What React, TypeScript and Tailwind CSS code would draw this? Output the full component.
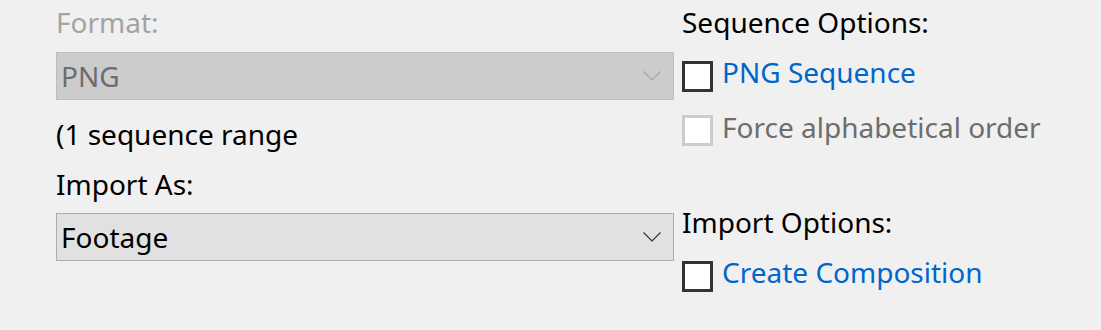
function Chevron({ color }: { color: string }) {
  return (
    <svg width="18" height="10" viewBox="0 0 18 10" className="mr-[8px]" fill="none">
      <path d="M0.5 0.5 L9 9 L17.5 0.5" stroke={color} strokeWidth="1.2" />
    </svg>
  );
}

function Select({ value, disabled }: { value: string; disabled?: boolean }) {
  return (
    <div
      className={
        "flex h-[48px] w-[618px] items-center justify-between border px-[4px] " +
        (disabled
          ? "border-[#bcbcbc] bg-[#cccccc] text-[#6d6d6d]"
          : "border-[#adadad] bg-[#e1e1e1] text-black")
      }
    >
      <span className="leading-[28px]">{value}</span>
      <Chevron color={disabled ? "#a6a6a6" : "#333333"} />
    </div>
  );
}

function Check({ label, disabled, shift }: { label: string; disabled?: boolean; shift: string }) {
  return (
    <div className="flex items-start gap-[9px]">
      <div
        className={
          "h-[31px] w-[31px] shrink-0 border-[3px] bg-white " +
          (disabled ? "border-[#cccccc]" : "border-[#333333]")
        }
      />
      <span className={"leading-[28px] " + shift + " " + (disabled ? "text-[#6d6d6d]" : "text-[#0066cc]")}>
        {label}
      </span>
    </div>
  );
}

export default function App() {
  return (
    <div
      className="flex h-[330px] w-full gap-[8px] bg-[#f0f0f0] pl-[56px] text-[28px] leading-[28px] text-black"
      style={{ fontFamily: '"Noto Sans", sans-serif' }}
    >
      {/* Left column */}
      <div className="flex w-[618px] flex-col">
        <div className="mt-[8px] h-[28px] text-[#a3a3a3]">Format:</div>
        <div className="mt-[16px]">
          <Select value="PNG" disabled />
        </div>
        <div className="mt-[20px] h-[28px]">(1 sequence range</div>
        <div className="mt-[22px] h-[28px]">Import As:</div>
        <div className="mt-[15px]">
          <Select value="Footage" />
        </div>
      </div>

      {/* Right column */}
      <div className="flex flex-col">
        <div className="mt-[8px] h-[28px]">Sequence Options:</div>
        <div className="mt-[25px]">
          <Check label="PNG Sequence" shift="-mt-[3px]" />
        </div>
        <div className="mt-[23px]">
          <Check label="Force alphabetical order" disabled shift="-mt-[2px]" />
        </div>
        <div className="mt-[62px] h-[28px]">Import Options:</div>
        <div className="mt-[25px]">
          <Check label="Create Composition" shift="-mt-[3px]" />
        </div>
      </div>
    </div>
  );
}
